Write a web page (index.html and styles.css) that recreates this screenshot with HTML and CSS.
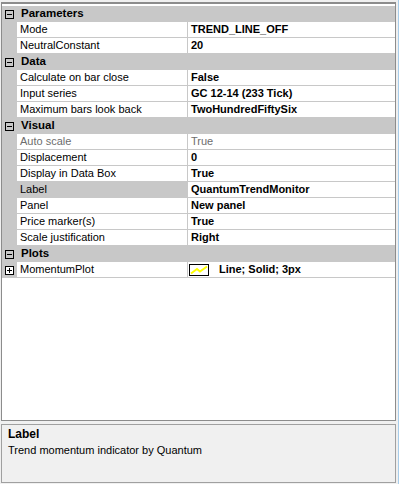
FILE: index.html
```html
<!DOCTYPE html>
<html lang="en">
<head>
    <meta charset="UTF-8">
    <title>Indicator properties</title>
    <link rel="stylesheet" href="styles.css">
</head>
<body>
    <div class="window">
        <div class="grid">
            <div class="row category">
                <div class="margin"><svg class="expander" width="9" height="9" viewBox="0 0 9 9"><rect x="0.5" y="0.5" width="8" height="8" fill="none" stroke="#000"/><path d="M2 4.5h5" stroke="#000"/></svg></div>
                <div class="cat-name">Parameters</div>
            </div>
            <div class="row">
                <div class="margin"></div>
                <div class="name">Mode</div>
                <div class="value">TREND_LINE_OFF</div>
            </div>
            <div class="row">
                <div class="margin"></div>
                <div class="name">NeutralConstant</div>
                <div class="value">20</div>
            </div>

            <div class="row category">
                <div class="margin"><svg class="expander" width="9" height="9" viewBox="0 0 9 9"><rect x="0.5" y="0.5" width="8" height="8" fill="none" stroke="#000"/><path d="M2 4.5h5" stroke="#000"/></svg></div>
                <div class="cat-name">Data</div>
            </div>
            <div class="row">
                <div class="margin"></div>
                <div class="name">Calculate on bar close</div>
                <div class="value">False</div>
            </div>
            <div class="row">
                <div class="margin"></div>
                <div class="name">Input series</div>
                <div class="value">GC 12-14 (233 Tick)</div>
            </div>
            <div class="row">
                <div class="margin"></div>
                <div class="name">Maximum bars look back</div>
                <div class="value">TwoHundredFiftySix</div>
            </div>

            <div class="row category">
                <div class="margin"><svg class="expander" width="9" height="9" viewBox="0 0 9 9"><rect x="0.5" y="0.5" width="8" height="8" fill="none" stroke="#000"/><path d="M2 4.5h5" stroke="#000"/></svg></div>
                <div class="cat-name">Visual</div>
            </div>
            <div class="row readonly">
                <div class="margin"></div>
                <div class="name">Auto scale</div>
                <div class="value">True</div>
            </div>
            <div class="row">
                <div class="margin"></div>
                <div class="name">Displacement</div>
                <div class="value">0</div>
            </div>
            <div class="row">
                <div class="margin"></div>
                <div class="name">Display in Data Box</div>
                <div class="value">True</div>
            </div>
            <div class="row selected">
                <div class="margin"></div>
                <div class="name">Label</div>
                <div class="value">QuantumTrendMonitor</div>
            </div>
            <div class="row">
                <div class="margin"></div>
                <div class="name">Panel</div>
                <div class="value">New panel</div>
            </div>
            <div class="row">
                <div class="margin"></div>
                <div class="name">Price marker(s)</div>
                <div class="value">True</div>
            </div>
            <div class="row">
                <div class="margin"></div>
                <div class="name">Scale justification</div>
                <div class="value">Right</div>
            </div>

            <div class="row category">
                <div class="margin"><svg class="expander" width="9" height="9" viewBox="0 0 9 9"><rect x="0.5" y="0.5" width="8" height="8" fill="none" stroke="#000"/><path d="M2 4.5h5" stroke="#000"/></svg></div>
                <div class="cat-name">Plots</div>
            </div>
            <div class="row">
                <div class="margin"><svg class="expander" width="9" height="9" viewBox="0 0 9 9"><rect x="0.5" y="0.5" width="8" height="8" fill="#fff" stroke="#000"/><path d="M2 4.5h5M4.5 2v5" stroke="#000"/></svg></div>
                <div class="name">MomentumPlot</div>
                <div class="value plot-value">
                    <svg class="swatch" width="20" height="12" viewBox="0 0 20 12"><rect x="0.5" y="0.5" width="19" height="11" fill="#fff" stroke="#000"/><path d="M2 9.5l6-4.5 3 2.5 7-5" fill="none" stroke="#ffff00" stroke-width="2"/></svg>
                    <span>Line; Solid; 3px</span>
                </div>
            </div>
        </div>

        <div class="help">
            <div class="help-title">Label</div>
            <div class="help-text">Trend momentum indicator by Quantum</div>
        </div>
    </div>
</body>
</html>
```

FILE: styles.css
```css
* {
    margin: 0px;
    padding: 0px;
    box-sizing: border-box;
}

html {
    overflow: hidden;
}

body {
    width: 399px;
    height: 484px;
    background-color: #f0f0f0;
    font-family: 'Liberation Sans', Arial, sans-serif;
    font-size: 11px;
    color: #000;
}

.window {
    height: 100%;
    display: flex;
    flex-direction: column;
    gap: 3px;
    padding: 2px 2px 1px 1px;
    border-right: 1px solid #a8cdea;
}

/* Property grid */
.grid {
    flex: 1;
    background-color: #fff;
    border: 1px solid #8c8c8c;
    border-top-width: 2px;
    padding-top: 2px;
}

.row {
    display: flex;
    height: 16px;
    line-height: 15px;
}

.margin {
    width: 15px;
    flex-shrink: 0;
    background-color: #c8c8c8;
    display: flex;
    align-items: center;
    justify-content: center;
}

.expander {
    display: block;
}

.name {
    width: 171px;
    flex-shrink: 0;
    padding-left: 3px;
    border-bottom: 1px solid #c8c8c8;
    border-right: 1px solid #c8c8c8;
    white-space: nowrap;
    overflow: hidden;
}

.value {
    flex: 1;
    padding-left: 3px;
    font-weight: bold;
    border-bottom: 1px solid #c8c8c8;
    white-space: nowrap;
}

.category {
    background-color: #c8c8c8;
}

.cat-name {
    flex: 1;
    padding-left: 4px;
    font-weight: bold;
    font-size: 11.5px;
}

.readonly .name,
.readonly .value {
    color: #6d6d6d;
}

.readonly .value {
    font-weight: normal;
}

.selected .name {
    background-color: #c8c8c8;
}

.plot-value {
    display: flex;
    align-items: center;
    gap: 10px;
    padding-left: 1px;
}

.swatch {
    display: block;
}

/* Help pane */
.help {
    height: 59px;
    flex-shrink: 0;
    border: 1px solid #a0a0a0;
    padding: 2px 6px;
}

.help-title {
    font-weight: bold;
    font-size: 12px;
    line-height: 15px;
}

.help-text {
    line-height: 16px;
}
```
